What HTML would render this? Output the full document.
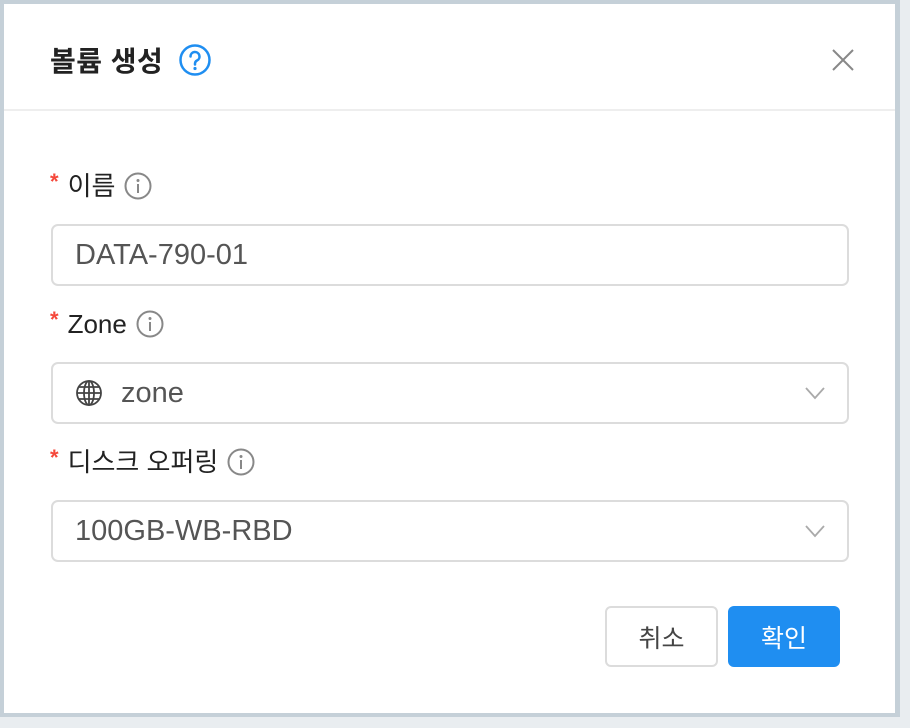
<!DOCTYPE html>
<html><head><meta charset="utf-8"><style>
*{box-sizing:border-box;margin:0;padding:0}
body{width:910px;height:728px;background:#e9edf0;font-family:"Liberation Sans","Noto Sans CJK KR",sans-serif;position:relative;overflow:hidden}
.frame{position:absolute;left:0;top:0;width:900px;height:717px;background:#c5d0d8}
.panel{position:absolute;left:4px;top:4px;width:891px;height:709px;background:#fff}
.hd{position:absolute;left:0;top:0;width:891px;height:107px;border-bottom:2px solid #eeeeee}
.title{position:absolute;left:46px;top:36px;font-size:28px;font-weight:bold;color:#222;letter-spacing:0.5px}
.q{position:absolute;left:174px;top:39px}
.x{position:absolute;left:827px;top:44px}
.lab{position:absolute;left:46px;font-size:26px;color:#222;display:flex;align-items:center;line-height:36px}
.lab .s{color:#f5483b;font-size:22px;margin-right:9px;position:relative;top:-4px;font-weight:bold}
.lab svg{margin-left:9px}
.inp{position:absolute;left:47px;width:798px;height:62px;border:2px solid #dcdcdc;border-radius:7px;font-size:29px;color:#555;display:flex;align-items:center;padding-left:22px}
.chev{position:absolute;right:22px;top:22px}
.btn{position:absolute;top:602px;height:61px;border-radius:6px;font-size:25px;display:flex;align-items:center;justify-content:center}
</style></head><body>
<div class="frame"></div>
<div class="panel">
<div class="hd">
<div class="title">볼륨 생성</div>
<svg class="q" width="34" height="34" viewBox="0 0 34 34"><circle cx="17" cy="17" r="14.5" fill="none" stroke="#1f8ef1" stroke-width="2.5"/><path d="M12.5 13.5a4.5 4.5 0 1 1 6.5 4c-1.5.8-2 1.6-2 3v1" fill="none" stroke="#1f8ef1" stroke-width="2.5" stroke-linecap="round"/><circle cx="17" cy="25.5" r="1.6" fill="#1f8ef1"/></svg>
<svg class="x" width="24" height="24" viewBox="0 0 24 24"><path d="M2 2L22 22M22 2L2 22" stroke="#888" stroke-width="2"/></svg>
</div>
<div class="lab" style="top:164px"><span class="s">*</span>이름<svg width="28" height="28" viewBox="0 0 28 28"><circle cx="14" cy="14" r="12.5" fill="none" stroke="#888" stroke-width="2"/><circle cx="14" cy="8.5" r="1.5" fill="#888"/><path d="M14 12v9" stroke="#888" stroke-width="2"/></svg></div>
<div class="inp" style="top:220px">DATA-790-01</div>
<div class="lab" style="top:302px"><span class="s">*</span>Zone<svg width="28" height="28" viewBox="0 0 28 28"><circle cx="14" cy="14" r="12.5" fill="none" stroke="#888" stroke-width="2"/><circle cx="14" cy="8.5" r="1.5" fill="#888"/><path d="M14 12v9" stroke="#888" stroke-width="2"/></svg></div>
<div class="inp" style="top:358px"><svg width="28" height="28" viewBox="0 0 28 28" style="margin-right:18px"><g fill="none" stroke="#444" stroke-width="1.8"><circle cx="14" cy="14" r="12"/><ellipse cx="14" cy="14" rx="5" ry="12"/><path d="M14 2v24M2 14h24M4 8h20M4 20h20"/></g></svg>zone<svg class="chev" width="20" height="14" viewBox="0 0 20 14"><path d="M1 2l9 10 9-10" fill="none" stroke="#aaa" stroke-width="1.8"/></svg></div>
<div class="lab" style="top:440px"><span class="s">*</span>디스크 오퍼링<svg width="28" height="28" viewBox="0 0 28 28"><circle cx="14" cy="14" r="12.5" fill="none" stroke="#888" stroke-width="2"/><circle cx="14" cy="8.5" r="1.5" fill="#888"/><path d="M14 12v9" stroke="#888" stroke-width="2"/></svg></div>
<div class="inp" style="top:496px">100GB-WB-RBD<svg class="chev" width="20" height="14" viewBox="0 0 20 14"><path d="M1 2l9 10 9-10" fill="none" stroke="#aaa" stroke-width="1.8"/></svg></div>
<div class="btn" style="left:601px;width:113px;border:2px solid #dcdcdc;color:#444;background:#fff">취소</div>
<div class="btn" style="left:724px;width:112px;background:#1f8ef1;color:#fff">확인</div>
</div>
</body></html>
